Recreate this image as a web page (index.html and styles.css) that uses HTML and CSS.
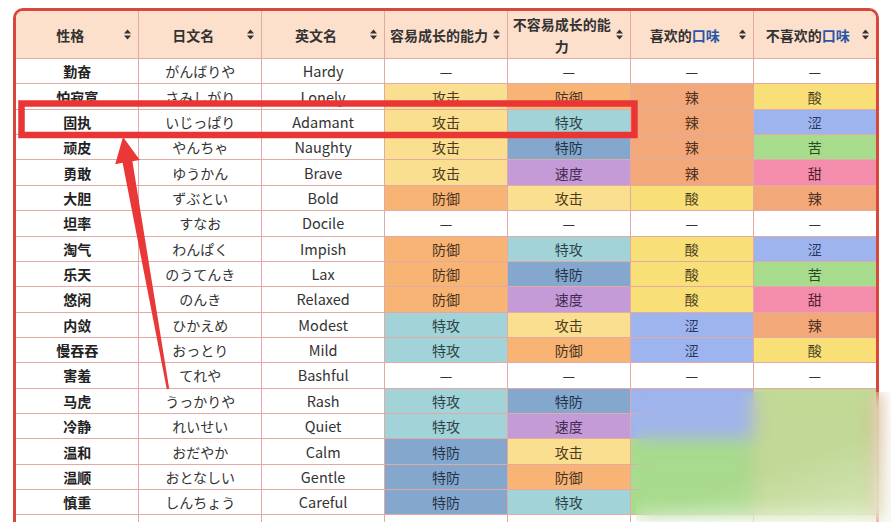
FILE: index.html
```html
<!DOCTYPE html>
<html lang="zh">
<head>
<meta charset="utf-8">
<title>性格表</title>
<link rel="stylesheet" href="styles.css">
</head>
<body>
<div class="page">
  <div class="frame">
    <table class="natures">
      <thead>
        <tr>
          <th>性格<span class="sort"><svg width="7" height="11" viewBox="0 0 7 11"><path d="M3.5 0.5L7 4.5H0Z M0 6.5H7L3.5 10.5Z"/></svg></span></th>
          <th>日文名<span class="sort"><svg width="7" height="11" viewBox="0 0 7 11"><path d="M3.5 0.5L7 4.5H0Z M0 6.5H7L3.5 10.5Z"/></svg></span></th>
          <th>英文名<span class="sort"><svg width="7" height="11" viewBox="0 0 7 11"><path d="M3.5 0.5L7 4.5H0Z M0 6.5H7L3.5 10.5Z"/></svg></span></th>
          <th>容易成长的能力<span class="sort"><svg width="7" height="11" viewBox="0 0 7 11"><path d="M3.5 0.5L7 4.5H0Z M0 6.5H7L3.5 10.5Z"/></svg></span></th>
          <th>不容易成长的能力<span class="sort"><svg width="7" height="11" viewBox="0 0 7 11"><path d="M3.5 0.5L7 4.5H0Z M0 6.5H7L3.5 10.5Z"/></svg></span></th>
          <th>喜欢的<span class="link">口味</span><span class="sort"><svg width="7" height="11" viewBox="0 0 7 11"><path d="M3.5 0.5L7 4.5H0Z M0 6.5H7L3.5 10.5Z"/></svg></span></th>
          <th>不喜欢的<span class="link">口味</span><span class="sort"><svg width="7" height="11" viewBox="0 0 7 11"><path d="M3.5 0.5L7 4.5H0Z M0 6.5H7L3.5 10.5Z"/></svg></span></th>
        </tr>
      </thead>
      <tbody>
        <tr><td class="name">勤奋</td><td>がんばりや</td><td class="en">Hardy</td><td>—</td><td>—</td><td>—</td><td>—</td></tr>
        <tr><td class="name">怕寂寞</td><td>さみしがり</td><td class="en">Lonely</td><td class="atk">攻击</td><td class="def">防御</td><td class="spicy">辣</td><td class="sour">酸</td></tr>
        <tr><td class="name">固执</td><td>いじっぱり</td><td class="en">Adamant</td><td class="atk">攻击</td><td class="spa">特攻</td><td class="spicy">辣</td><td class="dry">涩</td></tr>
        <tr><td class="name">顽皮</td><td>やんちゃ</td><td class="en">Naughty</td><td class="atk">攻击</td><td class="spd">特防</td><td class="spicy">辣</td><td class="bitter">苦</td></tr>
        <tr><td class="name">勇敢</td><td>ゆうかん</td><td class="en">Brave</td><td class="atk">攻击</td><td class="spe">速度</td><td class="spicy">辣</td><td class="sweet">甜</td></tr>
        <tr><td class="name">大胆</td><td>ずぶとい</td><td class="en">Bold</td><td class="def">防御</td><td class="atk">攻击</td><td class="sour">酸</td><td class="spicy">辣</td></tr>
        <tr><td class="name">坦率</td><td>すなお</td><td class="en">Docile</td><td>—</td><td>—</td><td>—</td><td>—</td></tr>
        <tr><td class="name">淘气</td><td>わんぱく</td><td class="en">Impish</td><td class="def">防御</td><td class="spa">特攻</td><td class="sour">酸</td><td class="dry">涩</td></tr>
        <tr><td class="name">乐天</td><td>のうてんき</td><td class="en">Lax</td><td class="def">防御</td><td class="spd">特防</td><td class="sour">酸</td><td class="bitter">苦</td></tr>
        <tr><td class="name">悠闲</td><td>のんき</td><td class="en">Relaxed</td><td class="def">防御</td><td class="spe">速度</td><td class="sour">酸</td><td class="sweet">甜</td></tr>
        <tr><td class="name">内敛</td><td>ひかえめ</td><td class="en">Modest</td><td class="spa">特攻</td><td class="atk">攻击</td><td class="dry">涩</td><td class="spicy">辣</td></tr>
        <tr><td class="name">慢吞吞</td><td>おっとり</td><td class="en">Mild</td><td class="spa">特攻</td><td class="def">防御</td><td class="dry">涩</td><td class="sour">酸</td></tr>
        <tr><td class="name">害羞</td><td>てれや</td><td class="en">Bashful</td><td>—</td><td>—</td><td>—</td><td>—</td></tr>
        <tr><td class="name">马虎</td><td>うっかりや</td><td class="en">Rash</td><td class="spa">特攻</td><td class="spd">特防</td><td class="dry wiped">涩</td><td class="faded wiped">苦</td></tr>
        <tr><td class="name">冷静</td><td>れいせい</td><td class="en">Quiet</td><td class="spa">特攻</td><td class="spe">速度</td><td class="dry wiped">涩</td><td class="faded wiped">甜</td></tr>
        <tr><td class="name">温和</td><td>おだやか</td><td class="en">Calm</td><td class="spd">特防</td><td class="atk">攻击</td><td class="bitter wiped">苦</td><td class="faded wiped">辣</td></tr>
        <tr><td class="name">温顺</td><td>おとなしい</td><td class="en">Gentle</td><td class="spd">特防</td><td class="def">防御</td><td class="bitter wiped">苦</td><td class="faded wiped">酸</td></tr>
        <tr><td class="name">慎重</td><td>しんちょう</td><td class="en">Careful</td><td class="spd">特防</td><td class="spa">特攻</td><td class="bitter wiped">苦</td><td class="faded wiped">涩</td></tr>
        <tr class="next"><td></td><td></td><td></td><td></td><td></td><td></td><td></td></tr>
      </tbody>
    </table>
  </div>

  <div class="smudge"></div>

  <svg class="marks" width="891" height="522" viewBox="0 0 891 522">
    <rect x="21.5" y="103.5" width="613" height="31.5" fill="none" stroke="#ea3535" stroke-width="6.5"/>
    <polygon fill="#ea3838" points="123,137 139.8,160 132.4,161.2 169.2,388.8 166.8,389.2 122.6,162.8 115.2,164.3"/>
  </svg>
</div>
</body>
</html>
```

FILE: styles.css
```css
html, body {
  margin: 0;
  padding: 0;
  background: #ffffff;
}

body {
  font-family: "Noto Sans CJK SC", "Noto Sans", sans-serif;
  color: #333333;
}

.page {
  position: relative;
  width: 891px;
  height: 522px;
  overflow: hidden;
  padding: 8px 0 0 13px;
  box-sizing: border-box;
}

.frame {
  width: 860px;
  border: 3px solid #d8473c;
  border-radius: 10px;
  overflow: hidden;
  background: #ffffff;
}

.natures {
  width: 860px;
  border-collapse: collapse;
  table-layout: fixed;
}

.natures th,
.natures td {
  border: 1px solid #e3aaa4;
  text-align: center;
  padding: 0;
}

.natures tr > :first-child {
  border-left: none;
}

.natures tr > :last-child {
  border-right: none;
}

.natures thead th {
  border-top: none;
  position: relative;
  height: 47px;
  padding: 0 16px 0 2px;
  background: #fde0cc;
  font-size: 14px;
  font-weight: bold;
  line-height: 22px;
  color: #333333;
}

.natures .link {
  color: #2a55a8;
}

.sort {
  position: absolute;
  right: 7px;
  top: 50%;
  margin-top: -6px;
  width: 7px;
  height: 11px;
}

.sort svg {
  display: block;
  fill: #333333;
}

.natures td {
  height: 24.37px;
  font-size: 14px;
  line-height: 20px;
  color: #333333;
}

.natures td.name {
  font-weight: bold;
  color: #222222;
}

.natures td.en {
  font-size: 14.5px;
}

.atk { background: #fbdf90; color: #4a3a20 !important; }
.def { background: #f8b474; color: #4a3220 !important; }
.spa { background: #a1d3d8; color: #2c4448 !important; }
.spd { background: #84a8cd; color: #24334a !important; }
.spe { background: #c59bd7; color: #432a52 !important; }
.spicy { background: #f3a87a; color: #4a2e20 !important; }
.sour { background: #f8df78; color: #4a3d20 !important; }
.dry { background: #9eb4ee; color: #2a3560 !important; }
.bitter { background: #a6dc8c; color: #2a4a24 !important; }
.sweet { background: #f48dab; color: #55202e !important; }
.faded { background: #c0da95; }

.natures td.wiped {
  color: transparent !important;
}

.smudge {
  position: absolute;
  left: 636px;
  top: 392px;
  width: 255px;
  height: 130px;
  -webkit-backdrop-filter: blur(9px);
  backdrop-filter: blur(9px);
  background: linear-gradient(160deg, rgba(255,255,255,0) 55%, rgba(240,250,230,0.45) 100%);
}

.marks {
  position: absolute;
  left: 0;
  top: 0;
  pointer-events: none;
}
```
